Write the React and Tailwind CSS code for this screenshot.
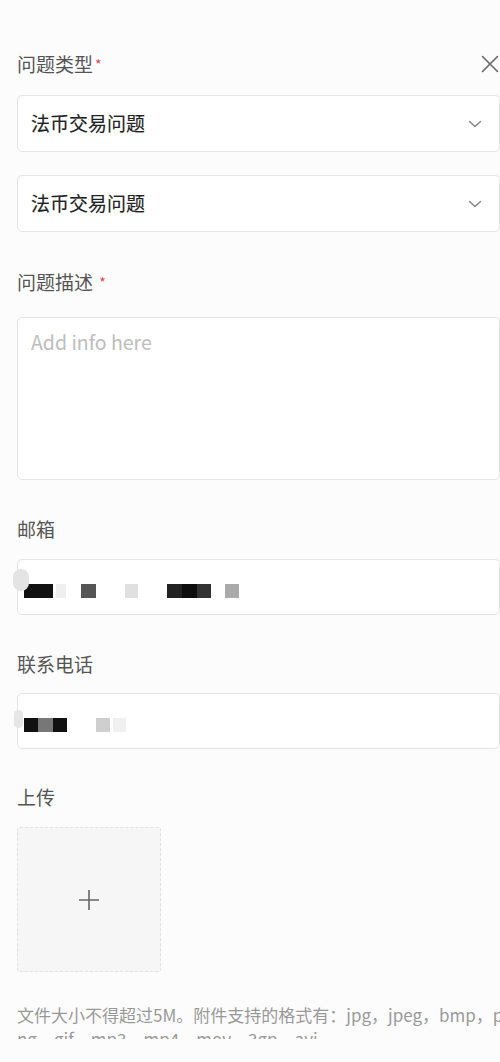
const font = { fontFamily: '"Noto Sans CJK SC", "Noto Sans", sans-serif' };

function Label({ text, required, className = '' }) {
  return (
    <div className={`text-[19px] leading-[26px] text-[#555] ${className}`}>
      {text}
      {required && <span className="text-[#e0464e] text-[14px] align-top ml-[2px]">*</span>}
    </div>
  );
}

function Chevron() {
  return (
    <svg width="14" height="8" viewBox="0 0 14 8" fill="none" stroke="#8a8a8a" strokeWidth="1.6" strokeLinecap="round" strokeLinejoin="round">
      <path d="M1.5 1.5 L7 6.5 L12.5 1.5" />
    </svg>
  );
}

function Select({ value, className = '' }) {
  return (
    <div className={`h-[57px] w-[483px] bg-white border border-[#e4e4e4] rounded-[5px] flex items-center justify-between pl-[13px] pr-[17px] ${className}`}>
      <span className="text-[19px] text-[#222] [-webkit-text-stroke:0.15px_#222]">{value}</span>
      <Chevron />
    </div>
  );
}

function Block({ w, c, ml = 0 }) {
  return <div className="h-[14px] shrink-0" style={{ width: w, background: c, marginLeft: ml }} />;
}

export default function App() {
  return (
    <div className="w-[500px] h-[1062px] bg-[#fcfcfc] overflow-hidden" style={font}>
      <div className="h-[1039px] overflow-hidden">
        <div className="w-[520px] pl-[17px] pt-[51px] flex flex-col">
          {/* 问题类型 */}
          <div className="flex items-center w-[483px] justify-between">
            <Label text="问题类型" required />
            <svg width="18" height="18" viewBox="0 0 18 18" stroke="#666" strokeWidth="1.6" strokeLinecap="round" className="mr-[1px]">
              <path d="M1.5 1.5 L16.5 16.5 M16.5 1.5 L1.5 16.5" />
            </svg>
          </div>
          <Select value="法币交易问题" className="mt-[18px]" />
          <Select value="法币交易问题" className="mt-[23px]" />

          {/* 问题描述 */}
          <Label text="问题描述 " required className="mt-[37px]" />
          <div className="mt-[22px] h-[163px] w-[483px] bg-white border border-[#e4e4e4] rounded-[5px] px-[13px] pt-[9px]">
            <span className="text-[19.5px] text-[#bdbdbd]">Add info here</span>
          </div>

          {/* 邮箱 */}
          <Label text="邮箱" className="mt-[36px]" />
          <div className="relative mt-[17px] h-[56px] w-[483px] bg-white border border-[#e4e4e4] rounded-[5px] flex items-center pl-[6px] pt-[8px]">
            <div className="absolute left-[-5px] top-[9px] w-[16px] h-[22px] rounded-full bg-[#e4e4e4]" />
            <Block w={29} c="#111" />
            <Block w={10} c="#efefef" ml={3} />
            <Block w={15} c="#555" ml={15} />
            <Block w={13} c="#e0e0e0" ml={29} />
            <Block w={15} c="#222" ml={29} />
            <Block w={15} c="#0e0e0e" />
            <Block w={14} c="#333" />
            <Block w={14} c="#aaa" ml={14} />
          </div>

          {/* 联系电话 */}
          <Label text="联系电话" className="mt-[36px]" />
          <div className="relative mt-[16px] h-[56px] w-[483px] bg-white border border-[#e4e4e4] rounded-[5px] flex items-center pl-[6px] pt-[8px]">
            <div className="absolute left-[-4px] top-[16px] w-[9px] h-[18px] rounded-full bg-[#e6e6e6]" />
            <Block w={14} c="#111" />
            <Block w={15} c="#777" />
            <Block w={14} c="#111" />
            <Block w={14} c="#cfcfcf" ml={29} />
            <Block w={13} c="#f0f0f0" ml={3} />
          </div>

          {/* 上传 */}
          <Label text="上传" className="mt-[35px]" />
          <div className="mt-[17px] w-[144px] h-[145px] bg-[#f6f6f6] border border-dashed border-[#e2e2e2] rounded-[3px] flex items-center justify-center">
            <svg width="22" height="22" viewBox="0 0 22 22" stroke="#666" strokeWidth="1.6">
              <path d="M11 1 V21 M1 11 H21" />
            </svg>
          </div>

          <p className="mt-[31px] text-[17px] leading-[24px] text-[#999] whitespace-nowrap">
            文件大小不得超过5M。附件支持的格式有：jpg，jpeg，bmp，p
            <br />
            ng，gif，mp3，mp4，mov，3gp，avi
          </p>
        </div>
      </div>
    </div>
  );
}
